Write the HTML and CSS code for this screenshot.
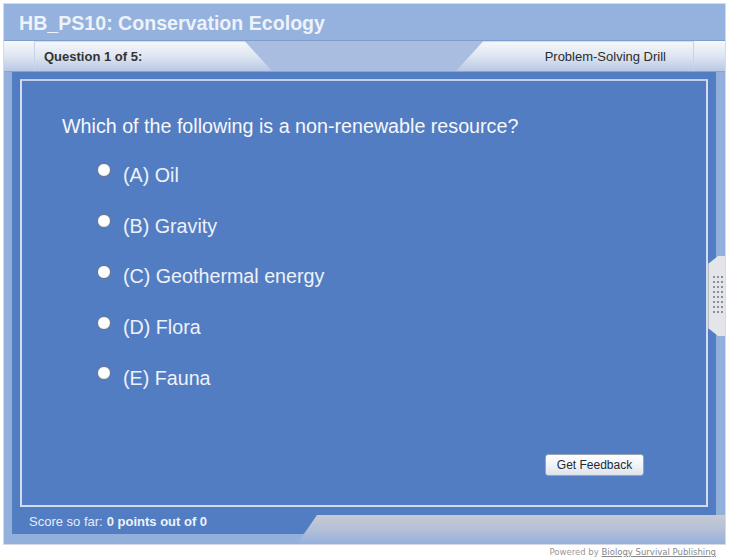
FILE: index.html
```html
<!DOCTYPE html>
<html lang="en">

<head>
    <meta charset="UTF-8">
    <meta name="viewport" content="width=device-width, initial-scale=1.0">
    <title>HB_PS10: Conservation Ecology</title>
    <link rel="stylesheet" href="styles.css">
</head>

<body>
    <div class="drill-frame">
        <div class="title-bar">
            <h1>HB_PS10: Conservation Ecology</h1>
        </div>

        <div class="tab-bar">
            <div class="tab-cap"></div>
            <div class="tab tab-left">Question 1 of 5:</div>
            <div class="tab-gap"></div>
            <div class="tab tab-right">Problem-Solving Drill</div>
            <div class="tab-cap tab-cap-right"></div>
        </div>

        <div class="drill-panel">
            <div class="question-box">
                <p class="question-text">Which of the following is a non-renewable resource?</p>

                <ul class="answer-list">
                    <li class="answer"><span class="radio"></span>(A) Oil</li>
                    <li class="answer"><span class="radio"></span>(B) Gravity</li>
                    <li class="answer"><span class="radio"></span>(C) Geothermal energy</li>
                    <li class="answer"><span class="radio"></span>(D) Flora</li>
                    <li class="answer"><span class="radio"></span>(E) Fauna</li>
                </ul>

                <div class="actions">
                    <button type="button" class="btn-feedback">Get Feedback</button>
                </div>
            </div>

            <div class="score-row">
                Score so far: <b>0 points out of 0</b>
            </div>
        </div>

        <!-- decorative bits laid over the frame -->
        <div class="footer-wedge"></div>
        <div class="side-handle">
            <span></span><span></span><span></span><span></span><span></span><span></span><span></span><span></span>
        </div>
    </div>

    <div class="powered-by">
        Powered by <a href="#">Biology Survival Publishing</a>
    </div>
</body>

</html>
```

FILE: styles.css
```css
:root {
    --frame-blue: #93afdc;
    --panel-blue: #537dc2;
    --text-light: #eef2fa;
    --tab-dark: #a9bde0;
}

* {
    box-sizing: border-box;
    margin: 0;
    padding: 0;
}

body {
    font-family: 'Liberation Sans', Arial, sans-serif;
    background-color: #ffffff;
    padding: 3px 0 0 3px;
}

.drill-frame {
    position: relative;
    width: 723px;
    height: 542px;
    border: 1px solid #d6dae2;
    background-color: var(--frame-blue);
    display: flex;
    flex-direction: column;
}

.title-bar {
    height: 38px;
    background-color: #95b1dd;
    border-bottom: 1px solid #7f9dca;
    padding-left: 15px;
    padding-top: 3px;
    display: flex;
    align-items: center;
}

.title-bar h1 {
    color: var(--text-light);
    font-size: 19.6px;
    font-weight: bold;
}

.tab-bar {
    height: 31px;
    display: flex;
    background-color: var(--tab-dark);
    border-bottom: 1px solid #8aa3cf;
}

.tab,
.tab-cap {
    background: linear-gradient(#f6f8fc, #dfe6f2 50%, #b9c8e4);
    font-size: 13px;
    display: flex;
    align-items: center;
    color: #333;
}

.tab-cap {
    width: 31px;
    border-right: 1px solid #c9d3e6;
}

.tab-cap-right {
    width: 32px;
    border-right: none;
    border-left: 1px solid #c9d3e6;
}

.tab-left {
    width: 237px;
    padding-left: 9px;
    font-weight: bold;
    clip-path: polygon(0 0, 210px 0, 100% 100%, 0 100%);
}

.tab-gap {
    flex: 1;
}

.tab-right {
    width: 237px;
    justify-content: flex-end;
    padding-right: 27px;
    color: #2c2c2c;
    clip-path: polygon(27px 0, 100% 0, 100% 100%, 0 100%);
}

.drill-panel {
    flex: 1;
    margin: 0 9px 10px 8px;
    background-color: var(--panel-blue);
    padding: 7px 8px 0 8px;
    display: flex;
    flex-direction: column;
}

.question-box {
    height: 428px;
    border: 2px solid #d2dcee;
    border-top-color: #c3cfe6;
    padding: 34px 0 0 40px;
    position: relative;
}

.question-text {
    color: #f6f8fc;
    font-size: 19.7px;
    line-height: 22px;
}

.answer-list {
    list-style: none;
    margin-top: 13px;
    padding-left: 35px;
}

.answer {
    display: flex;
    align-items: center;
    height: 50.75px;
    color: var(--text-light);
    font-size: 19.7px;
}

.radio {
    width: 14px;
    height: 14px;
    border-radius: 50%;
    border: 1px solid #6d7785;
    background: radial-gradient(circle at 40% 35%, #ffffff 55%, #dcdfe4);
    margin-right: 12px;
    position: relative;
    top: -5px;
}

.actions {
    position: absolute;
    left: 523px;
    top: 373px;
}

.btn-feedback {
    width: 99px;
    height: 22px;
    border: 1px solid #9aa3b2;
    border-radius: 3px;
    background: linear-gradient(#ffffff, #eef1f5 60%, #dde2ea);
    font-family: 'Liberation Sans', Arial, sans-serif;
    font-size: 12px;
    color: #1c2b38;
    cursor: pointer;
}

.score-row {
    height: 27px;
    display: flex;
    align-items: center;
    gap: 4px;
    padding-left: 9px;
    padding-top: 2px;
    color: #e6ecf7;
    font-size: 13px;
}

.score-row b {
    color: #eef2fa;
}

.footer-wedge {
    position: absolute;
    left: 293px;
    right: 0;
    bottom: 0;
    height: 29px;
    background: linear-gradient(#c8cad2, #b4c0d8 50%, #95b0dc);
    clip-path: polygon(20px 0, 100% 0, 100% 100%, 0 100%);
}

.side-handle {
    position: absolute;
    left: 704px;
    top: 252px;
    width: 17px;
    height: 80px;
    background-color: #e3e5e8;
    border-left: 1px solid #b7bcc5;
    clip-path: polygon(0 8px, 10px 0, 100% 0, 100% 100%, 10px 100%, 0 72px);
    display: grid;
    grid-template-columns: repeat(3, 2px);
    grid-auto-rows: 2px;
    column-gap: 2px;
    row-gap: 3px;
    align-content: start;
    padding: 20px 0 0 4px;
}

.side-handle span {
    display: contents;
}

.side-handle span::before,
.side-handle span::after {
    content: '';
    background-color: #8a9099;
}

.side-handle span::after {
    grid-column: span 2;
    background: linear-gradient(90deg, #8a9099 2px, transparent 2px, transparent 4px, #8a9099 4px);
}

.powered-by {
    width: 713px;
    text-align: right;
    font-family: 'DejaVu Sans', sans-serif;
    font-size: 8.5px;
    color: #999;
    margin-top: 2px;
}

.powered-by a {
    color: #888;
}
```
